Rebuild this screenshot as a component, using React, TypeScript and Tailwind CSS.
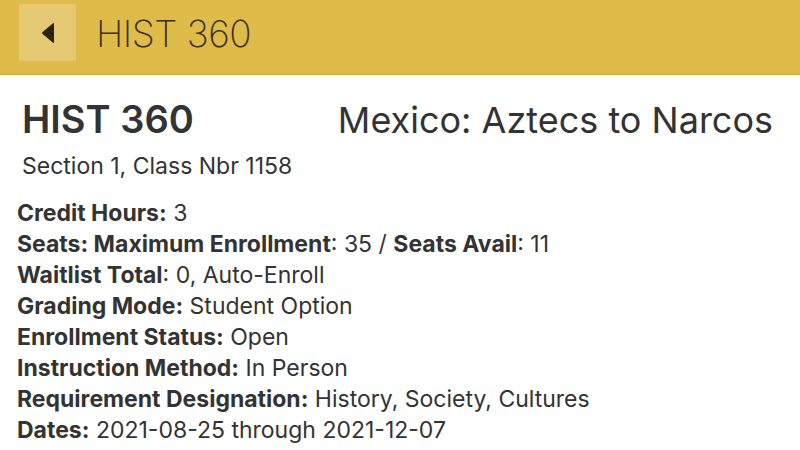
import React from "react";

const rows: { label: React.ReactNode; value: React.ReactNode }[] = [
    { label: "Credit Hours:", value: " 3" },
    {
        label: "Seats: Maximum Enrollment",
        value: (
            <>
                : 35 / <b className="font-bold">Seats Avail</b>: 11
            </>
        ),
    },
    { label: "Waitlist Total", value: ": 0, Auto-Enroll" },
    { label: "Grading Mode:", value: " Student Option" },
    { label: "Enrollment Status:", value: " Open" },
    { label: "Instruction Method:", value: " In Person" },
    { label: "Requirement Designation:", value: " History, Society, Cultures" },
    { label: "Dates:", value: " 2021-08-25 through 2021-12-07" },
];

const App = () => {
    return (
        <div
            className="w-[800px] h-[450px] bg-white overflow-hidden text-[#333333]"
            style={{ fontFamily: "Inter, 'Noto Sans', sans-serif" }}
        >
            {/* HEADER */}
            <div className="h-[75px] bg-[#dfbb4a] border-b border-[#d0ab3c] flex items-center">
                <div className="ml-[19px] w-[57px] h-[57px] bg-[#e5c872] flex items-center justify-center -mt-[9px]">
                    <svg width="14" height="22" viewBox="0 0 14 22">
                        <path
                            d="M13 2 L13 20 Q13 21.6 11.7 20.6 L1.6 12.1 Q0.5 11 1.6 9.9 L11.7 1.4 Q13 0.4 13 2 Z"
                            fill="#2a2214"
                        />
                    </svg>
                </div>
                <div className="ml-[20px] -mt-[7px] text-[37px] font-extralight tracking-[-0.5px] text-[#3a301c]">
                    HIST 360
                </div>
            </div>

            {/* TITLE */}
            <div className="flex justify-between items-baseline pl-[22px] pr-[27px] pt-[23px]">
                <div className="text-[38px] font-semibold leading-[42px]">HIST 360</div>
                <div className="text-[36px] leading-[42px]">Mexico: Aztecs to Narcos</div>
            </div>
            <div className="pl-[22px] pt-[11px] text-[23px] leading-[28px]">
                Section 1, Class Nbr 1158
            </div>

            {/* INFO */}
            <div className="pl-[17px] pt-[18px] text-[23px] leading-[31px]">
                {rows.map((r, i) => (
                    <div key={i} className="whitespace-pre">
                        <b className="font-bold">{r.label}</b>
                        {r.value}
                    </div>
                ))}
            </div>
        </div>
    );
};

export default App;
